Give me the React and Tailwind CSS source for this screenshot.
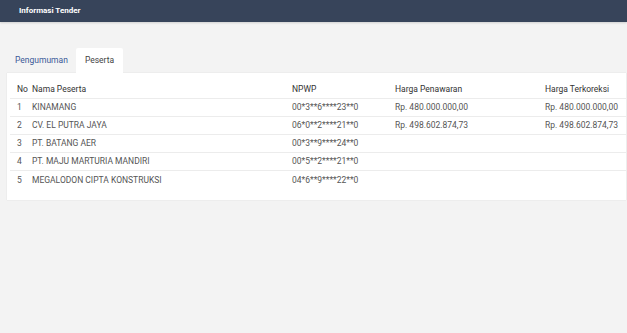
import React from "react";

const rows = [
  { no: 1, nama: "KINAMANG", npwp: "00*3**6****23**0", penawaran: "Rp. 480.000.000,00", terkoreksi: "Rp. 480.000.000,00" },
  { no: 2, nama: "CV. EL PUTRA JAYA", npwp: "06*0**2****21**0", penawaran: "Rp. 498.602.874,73", terkoreksi: "Rp. 498.602.874,73" },
  { no: 3, nama: "PT. BATANG AER", npwp: "00*3**9****24**0", penawaran: "", terkoreksi: "" },
  { no: 4, nama: "PT. MAJU MARTURIA MANDIRI", npwp: "00*5**2****21**0", penawaran: "", terkoreksi: "" },
  { no: 5, nama: "MEGALODON CIPTA KONSTRUKSI", npwp: "04*6**9****22**0", penawaran: "", terkoreksi: "" },
];

export default function App() {
  return (
    <div
      className="w-[627px] h-[333px] bg-[#f3f3f3] overflow-hidden"
      style={{ fontFamily: "Roboto, 'Liberation Sans', sans-serif" }}
    >
      <div className="h-[22px] bg-[#37445a] flex items-center pl-[19px] shadow-[0_1px_2px_rgba(0,0,0,0.15)]">
        <span className="text-white text-[8px] font-bold">Informasi Tender</span>
      </div>

      <div className="pt-[26px] pl-[7px]">
        <div className="flex items-end h-[25px] text-[8.5px]">
          <div className="pl-[8px] pr-[8px] h-full flex items-center text-[#3b5998]">Pengumuman</div>
          <div className="px-[9px] h-full flex items-center bg-white text-[#444] rounded-t-[2px]">Peserta</div>
        </div>

        <div className="bg-white w-[619px] pt-[8px] pb-[11px] pl-[3px] shadow-[0_0_1px_rgba(0,0,0,0.15)]">
          <div className="grid grid-cols-[15px_260px_103px_150px_1fr] h-[18px] items-center text-[8.5px] text-[#333] border-b border-[#ececec] pl-[7px]">
            <div>No</div>
            <div>Nama Peserta</div>
            <div>NPWP</div>
            <div>Harga Penawaran</div>
            <div>Harga Terkoreksi</div>
          </div>
          {rows.map((r, i) => (
            <div
              key={r.no}
              className={`grid grid-cols-[15px_260px_103px_150px_1fr] h-[18px] items-center text-[8.5px] text-[#555] pl-[7px] ${
                i < rows.length - 1 ? "border-b border-[#ececec]" : ""
              }`}
            >
              <div>{r.no}</div>
              <div>{r.nama}</div>
              <div>{r.npwp}</div>
              <div>{r.penawaran}</div>
              <div>{r.terkoreksi}</div>
            </div>
          ))}
        </div>
      </div>
    </div>
  );
}
